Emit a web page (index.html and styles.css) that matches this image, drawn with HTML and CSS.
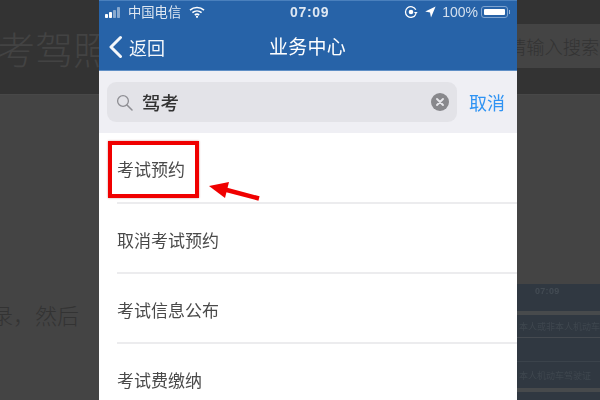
FILE: index.html
```html
<!DOCTYPE html>
<html lang="zh">
<head>
<meta charset="utf-8">
<title>业务中心</title>
<link rel="stylesheet" href="styles.css">
</head>
<body>
<div class="stage">
  <aside class="side left">
    <div class="side-head"><span class="big-title">考驾照</span></div>
    <div class="side-body"><p class="side-text">录，然后</p></div>
  </aside>
  <main class="phone">
    <header class="blue">
      <div class="status">
        <div class="status-l">
          <svg class="signal" width="19" height="11" viewBox="0 0 19 11"><rect x="0" y="7" width="3" height="4" rx=".8" fill="#fff"/><rect x="4" y="5" width="3" height="6" rx=".8" fill="#fff"/><rect x="8" y="3" width="3" height="8" rx=".8" fill="#fff" opacity=".45"/><rect x="12" y="0" width="3" height="11" rx=".8" fill="#fff" opacity=".45"/></svg>
          <span class="carrier">中国电信</span>
          <svg class="wifi" width="16" height="12" viewBox="0 0 16 12"><path d="M1 4.2C5 .6 11 .6 15 4.2M3.4 6.7c2.7-2.3 6.5-2.3 9.2 0M5.8 9c1.3-1 3.1-1 4.4 0" fill="none" stroke="#fff" stroke-width="1.6"/><circle cx="8" cy="10.8" r="1.1" fill="#fff"/></svg>
        </div>
        <span class="clock">07:09</span>
        <div class="status-r">
          <svg width="14" height="14" viewBox="0 0 14 14"><path d="M11.8 9.2A5.4 5.4 0 1 1 11.8 4.8" fill="none" stroke="#fff" stroke-width="1.3"/><circle cx="7" cy="7" r="2.3" fill="#fff"/><path d="M10 7h3.6l-1.8 2.4z" fill="#fff"/></svg>
          <svg class="loc" width="11" height="12" viewBox="0 0 11 12"><path d="M10.6.4 6 11.4 5 6.6.2 5.4z" fill="#fff"/></svg>
          <span class="pct">100%</span>
          <div class="battery"><div class="cell"></div></div><div class="nub"></div>
        </div>
      </div>
      <div class="nav">
        <div class="back">
          <svg width="15" height="24" viewBox="0 0 15 24"><path d="M12.5 2.5 3 12l9.5 9.5" fill="none" stroke="#fff" stroke-width="3" stroke-linecap="round" stroke-linejoin="round"/></svg>
          <span>返回</span>
        </div>
        <h1 class="nav-title">业务中心</h1>
      </div>
    </header>
    <div class="search-bar">
      <div class="field">
        <svg class="glass" width="17" height="17" viewBox="0 0 17 17"><circle cx="7" cy="7" r="5.4" fill="none" stroke="#8e8e93" stroke-width="1.3"/><path d="m11 11 5 5" stroke="#8e8e93" stroke-width="1.5" stroke-linecap="round"/></svg>
        <span class="query">驾考</span>
        <svg class="clear" width="18" height="18" viewBox="0 0 18 18"><circle cx="9" cy="9" r="9" fill="#88888c"/><path d="m6 6 6 6m0-6-6 6" stroke="#e6e6ea" stroke-width="1.9" stroke-linecap="round"/></svg>
      </div>
      <span class="cancel">取消</span>
    </div>
    <ul class="list">
      <li class="row">考试预约</li>
      <li class="row">取消考试预约</li>
      <li class="row">考试信息公布</li>
      <li class="row">考试费缴纳</li>
    </ul>
    <div class="redbox"></div>
    <svg class="arrow" width="56" height="24" viewBox="0 0 56 24"><path d="M51 18.5 15 9" stroke="#f00000" stroke-width="4.5" fill="none"/><path d="M1 6 21 2 17 18z" fill="#f00000"/></svg>
  </main>
  <aside class="side right">
    <div class="side-head"><div class="input">请输入搜索</div></div>
    <div class="side-body">
      <div class="shot">
        <div class="shot-time">07:09</div>
        <div class="shot-band"></div>
        <div class="shot-row">本人或非本人机动车</div>
        <div class="shot-row tall"></div>
        <div class="shot-row last">本人机动车驾驶证</div>
        <div class="shot-band"></div>
      </div>
    </div>
  </aside>
</div>
</body>
</html>
```
FILE: styles.css
```css
* { box-sizing: border-box; margin: 0; padding: 0; }
html, body { width: 600px; height: 400px; overflow: hidden; background: #444; }
body { font-family: "Noto Sans CJK SC", "Liberation Sans", sans-serif; }
.stage { display: flex; width: 600px; height: 400px; }

.side { display: flex; flex-direction: column; overflow: hidden; }
.left { width: 99px; }
.right { width: 83px; }
.side-head { height: 94px; background: #333; flex: none; }
.side-body { flex: 1; background: #444; border-top: 1px solid #484848; }
.left .side-head { padding-top: 20px; }
.big-title { display: block; width: 120px; margin-left: -3px; font-size: 38px; font-weight: 300; line-height: 56px; color: #434343; white-space: nowrap; }
.side-text { margin-top: 204px; margin-left: -9px; width: 110px; font-size: 22px; font-weight: 300; line-height: 30px; color: #333; white-space: nowrap; }
.right .side-head { padding-top: 24px; }
.input { height: 44px; background: #444; text-indent: -9px; font-size: 18.3px; font-weight: 300; line-height: 44px; color: #333; white-space: nowrap; overflow: hidden; }
.right .side-body { padding-top: 189px; }

.shot { height: 116px; background: #303841; overflow: hidden; color: #3f474f; filter: blur(.5px); }
.shot-time { height: 27px; padding: 0 0 0 18px; font: 700 9px/15px "Liberation Sans", sans-serif; letter-spacing: .3px; color: #434b53; }
.shot-band { height: 4px; background: #474a4c; }
.shot-row { height: 23px; padding-left: 2px; font-size: 9px; line-height: 23px; white-space: nowrap; border-bottom: 1px solid #454a50; }
.shot-row.tall { height: 24px; border-bottom-color: #3b434b; }
.shot-row.last { height: 26px; border-bottom: 0; line-height: 28px; }

.phone { position: relative; width: 418px; height: 400px; background: #fff; overflow: hidden; filter: blur(.4px); }
.blue { height: 71px; background: #2763a8; border-top: 1px solid #4a80bd; border-bottom: 1px solid #5f8fc6; color: #fff; }
.status { display: flex; align-items: center; justify-content: space-between; height: 22px; padding: 0 7px 0 6px; position: relative; }
.status-l { display: flex; align-items: center; width: 130px; }
.signal { margin-right: 4px; }
.carrier { width: 54px; font-size: 13.3px; line-height: 16px; opacity: .85; white-space: nowrap; }
.wifi { margin-left: 7px; }
.clock { font: 700 14px/16px "Liberation Sans", sans-serif; letter-spacing: .7px; opacity: .85; position: absolute; left: 191px; top: 3px; }
.status-r { display: flex; align-items: center; }
.loc { margin-left: 7px; }
.pct { font: 400 14px/16px "Liberation Sans", sans-serif; margin-left: 6px; opacity: .8; }
.battery { width: 27px; height: 12px; margin-left: 3px; padding: 2px; border: 1px solid #7fa4d0; border-radius: 3px; }
.cell { width: 100%; height: 100%; background: #fff; border-radius: 1px; }
.nub { width: 1px; height: 4px; margin-left: 1px; background: #9bb8da; }
.nav { position: relative; height: 47px; display: flex; align-items: center; justify-content: center; }
.back { position: absolute; left: 9px; top: 12px; display: flex; align-items: center; font-size: 18px; line-height: 24px; opacity: .95; }
.back span { margin-left: 6px; }
.nav-title { font-size: 19px; font-weight: 400; line-height: 26px; margin-top: -1px; margin-left: -1px; letter-spacing: .2px; }

.search-bar { display: flex; align-items: center; height: 62px; padding: 0 11px 0 8px; background: #efeff4; }
.field { display: flex; align-items: center; width: 350px; height: 40px; padding: 0 8px 0 9px; background: #e3e3e8; border-radius: 9px; }
.glass { flex: none; }
.query { flex: 1; margin-left: 9px; font-size: 18.5px; font-weight: 500; color: #333; line-height: 24px; }
.clear { flex: none; }
.cancel { margin-left: 12px; font-size: 18px; line-height: 24px; color: #2f93f3; white-space: nowrap; }

.list { list-style: none; padding-left: 18px; }
.row { height: 70px; padding-top: 1px; border-bottom: 2px solid #ececee; font-size: 17px; line-height: 70px; color: #4a4a4a; }
.row:first-child { height: 71px; }

.redbox { position: absolute; left: 9px; top: 141px; width: 91px; height: 57px; border: 4px solid #f00000; box-shadow: 0 0 2px rgba(120,0,0,.4); }
.arrow { position: absolute; left: 109px; top: 180px; }
```
